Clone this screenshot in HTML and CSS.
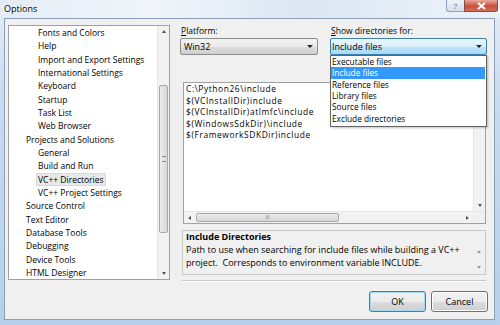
FILE: index.html
```html
<!DOCTYPE html>
<html lang="en">
<head>
    <meta charset="UTF-8">
    <title>Options</title>
    <link rel="stylesheet" href="styles.css">
</head>
<body>
    <div class="window">
        <div class="titlebar">
            <span class="title">Options</span>
            <div class="caption-btns">
                <span class="cap help">?</span>
                <span class="cap close">
                    <svg width="9" height="8" viewBox="0 0 9 8"><path d="M1 1 L8 7 M8 1 L1 7" stroke="#fff" stroke-width="2"/></svg>
                </span>
            </div>
        </div>

        <div class="client">
            <div class="tree">
                <ul class="tree-items">
                    <li class="child">Fonts and Colors</li>
                    <li class="child">Help</li>
                    <li class="child">Import and Export Settings</li>
                    <li class="child">International Settings</li>
                    <li class="child">Keyboard</li>
                    <li class="child">Startup</li>
                    <li class="child">Task List</li>
                    <li class="child">Web Browser</li>
                    <li>Projects and Solutions</li>
                    <li class="child">General</li>
                    <li class="child">Build and Run</li>
                    <li class="child"><span class="selected">VC++ Directories</span></li>
                    <li class="child">VC++ Project Settings</li>
                    <li>Source Control</li>
                    <li>Text Editor</li>
                    <li>Database Tools</li>
                    <li>Debugging</li>
                    <li>Device Tools</li>
                    <li>HTML Designer</li>
                </ul>
                <div class="vscroll tree-scroll">
                    <span class="arr up"></span>
                    <div class="track">
                        <div class="thumb"><span class="grip"></span></div>
                    </div>
                    <span class="arr down"></span>
                </div>
            </div>

            <div class="panel">
                <div class="fields">
                    <div class="field platform">
                        <label><u>P</u>latform:</label>
                        <div class="select">Win32<span class="caret"></span></div>
                    </div>
                    <div class="field show">
                        <label><u>S</u>how directories for:</label>
                        <div class="select focused">Include files<span class="caret"></span></div>
                        <ul class="dropdown">
                            <li>Executable files</li>
                            <li class="hot">Include files</li>
                            <li>Reference files</li>
                            <li>Library files</li>
                            <li>Source files</li>
                            <li>Exclude directories</li>
                        </ul>
                    </div>
                </div>

                <div class="dirlist">
                    <div class="dirs-body">
                        <ul class="dirs">
                            <li>C:\Python26\include</li>
                            <li>$(VCInstallDir)include</li>
                            <li>$(VCInstallDir)atlmfc\include</li>
                            <li>$(WindowsSdkDir)\include</li>
                            <li>$(FrameworkSDKDir)include</li>
                        </ul>
                        <div class="vscroll dir-scroll">
                            <span class="arr up"></span>
                            <div class="track"></div>
                            <span class="arr down"></span>
                        </div>
                    </div>
                    <div class="hscroll">
                        <span class="arr left"></span>
                        <div class="htrack">
                            <div class="hthumb"><span class="hgrip">III</span></div>
                        </div>
                        <span class="arr right"></span>
                        <span class="corner"></span>
                    </div>
                </div>

                <div class="desc">
                    <div class="desc-text">
                        <div class="desc-title">Include Directories</div>
                        <div>Path to use when searching for include files while building a VC++</div>
                        <div>project.&nbsp; Corresponds to environment variable INCLUDE.</div>
                    </div>
                    <div class="desc-scroll">
                        <span class="arr up"></span>
                        <span class="arr down"></span>
                    </div>
                </div>

                <div class="sep"></div>

                <div class="buttons">
                    <button class="btn default">OK</button>
                    <button class="btn">Cancel</button>
                </div>
            </div>
        </div>
    </div>
</body>
</html>
```

FILE: styles.css
```css
body {
    margin: 0;
    padding: 0;
    font-family: "Open Sans", "Noto Sans", sans-serif;
    font-size: 8.5px;
    color: #000;
}

ul {
    list-style-type: none;
    margin: 0;
    padding: 0;
}

/* Window frame */
.window {
    width: 500px;
    height: 325px;
    background: linear-gradient(to bottom, #e4edf7 0%, #c9dbef 30%, #b7cfea 100%);
    display: flex;
    flex-direction: column;
    overflow: hidden;
}

.titlebar {
    height: 18px;
    display: flex;
    justify-content: space-between;
    align-items: flex-start;
    background: linear-gradient(to right, #e3ecf6, #f1f5fa 30%, #dce7f3 60%, #ecf2f9);
}

.title {
    margin: 3px 0 0 4px;
    font-size: 9px;
    line-height: 11px;
    text-shadow: 0 0 4px #fff, 0 0 6px #fff;
}

.caption-btns {
    display: flex;
    margin-right: 2px;
}

.cap {
    height: 11px;
    display: flex;
    align-items: center;
    justify-content: center;
    border: 1px solid #8ea3bd;
    border-top: none;
    font-size: 8px;
    line-height: 8px;
    color: #56637a;
}

.help {
    width: 17px;
    background: linear-gradient(to bottom, #eef3f9, #d3dfee);
    border-radius: 0 0 0 3px;
    border-right: none;
}

.close {
    width: 32px;
    background: linear-gradient(to bottom, #e9a99c, #c7503b 55%, #d2705b);
    border-color: #8d4b45;
    border-radius: 0 0 3px 0;
}

.client {
    margin: 0 5px 0 4px;
    height: 302px;
    background-color: #f0f0f0;
    border: 1px solid #8aa0ba;
    display: flex;
    align-items: flex-start;
    padding: 6px 0 0 3px;
    box-sizing: border-box;
}

/* Tree on the left */
.tree {
    width: 162px;
    height: 255px;
    background-color: #fff;
    border: 1px solid #a0a0a0;
    box-sizing: border-box;
    display: flex;
    overflow: hidden;
}

.tree-items {
    flex: 1;
    line-height: 13.33px;
    white-space: nowrap;
}

.tree-items li {
    padding-left: 17px;
}

.tree-items li.child {
    padding-left: 29px;
}

.tree-items .selected {
    background-color: #e8e8e8;
    border: 1px solid #dadada;
    padding: 0 1px;
    margin-left: -2px;
}

/* Scrollbars */
.vscroll {
    width: 11px;
    background-color: #f2f2f2;
    border-left: 1px solid #e6e6e6;
    display: flex;
    flex-direction: column;
    align-items: center;
}

.track {
    flex: 1;
    width: 100%;
    position: relative;
}

.thumb {
    position: absolute;
    top: 48px;
    left: 1px;
    right: 1px;
    height: 148px;
    background: linear-gradient(to right, #ececec, #d8d8d8);
    border: 1px solid #a8a8a8;
    border-radius: 2px;
    box-sizing: border-box;
    display: flex;
    align-items: center;
    justify-content: center;
}

.grip {
    width: 4px;
    height: 4px;
    border-top: 1px solid #888;
    border-bottom: 1px solid #888;
}

.arr {
    width: 0;
    height: 0;
    border: 2.5px solid transparent;
    margin: 4px 0;
}

.arr.up {
    border-bottom: 3px solid #555;
    border-top-width: 0;
}

.arr.down {
    border-top: 3px solid #555;
    border-bottom-width: 0;
}

.arr.left {
    border-right: 3px solid #555;
    border-left-width: 0;
    margin: 0 4px;
}

.arr.right {
    border-left: 3px solid #555;
    border-right-width: 0;
    margin: 0 4px;
}

/* Right panel */
.panel {
    width: 308px;
    margin-left: 10px;
    display: flex;
    flex-direction: column;
}

.fields {
    display: flex;
    gap: 12px;
}

.field {
    display: flex;
    flex-direction: column;
    position: relative;
}

.field label {
    line-height: 11px;
    margin-bottom: 2px;
    padding-left: 1px;
}

.platform {
    width: 138px;
}

.show {
    width: 157px;
}

.select {
    height: 17px;
    box-sizing: border-box;
    border: 1px solid #8c8c8c;
    border-radius: 2px;
    background: linear-gradient(to bottom, #f2f2f2 0%, #ebebeb 50%, #dddddd 51%, #cfcfcf 100%);
    padding-left: 3px;
    line-height: 15px;
    font-size: 9px;
    display: flex;
    justify-content: space-between;
    align-items: center;
}

.select.focused {
    border-color: #3c7fb1;
    background: linear-gradient(to bottom, #eaf6fd 0%, #d9f0fc 50%, #bee6fd 51%, #a7d9f5 100%);
    padding-left: 1px;
}

.caret {
    width: 0;
    height: 0;
    border-left: 3px solid transparent;
    border-right: 3px solid transparent;
    border-top: 3px solid #222;
    margin-right: 4px;
}

.dropdown {
    position: absolute;
    top: 100%;
    left: 0;
    width: 157px;
    box-sizing: border-box;
    background-color: #fff;
    border: 1px solid #646464;
    line-height: 11.33px;
    font-size: 8.3px;
    padding: 0 0 2px 0;
    z-index: 10;
    box-shadow: 1px 1px 2px rgba(0, 0, 0, 0.25);
}

.dropdown li {
    padding-left: 1px;
}

.dropdown li.hot {
    background-color: #3399ff;
    color: #fff;
    margin-right: 1px;
}

/* Directory list */
.dirlist {
    margin: 27px 2px 0 3px;
    height: 142px;
    box-sizing: border-box;
    border: 1px solid #a0a0a0;
    background-color: #fff;
    display: flex;
    flex-direction: column;
}

.dirs-body {
    flex: 1;
    display: flex;
}

.dirs {
    flex: 1;
    line-height: 11.5px;
    font-size: 8.4px;
    letter-spacing: 0.6px;
    padding-left: 2px;
    white-space: nowrap;
}

.dir-scroll {
    justify-content: space-between;
}

.hscroll {
    height: 11px;
    background-color: #f2f2f2;
    border-top: 1px solid #e6e6e6;
    display: flex;
    align-items: center;
}

.htrack {
    flex: 1;
    height: 100%;
    position: relative;
}

.hthumb {
    position: absolute;
    top: 1px;
    bottom: 1px;
    left: 1px;
    width: 143px;
    background: linear-gradient(to bottom, #ececec, #d5d5d5);
    border: 1px solid #a8a8a8;
    border-radius: 2px;
    box-sizing: border-box;
    display: flex;
    align-items: center;
    justify-content: center;
}

.hgrip {
    font-size: 5px;
    line-height: 5px;
    color: #777;
}

.corner {
    width: 12px;
    height: 100%;
    background-color: #f0f0f0;
}

/* Description */
.desc {
    margin: 6px 2px 0 2px;
    height: 45px;
    box-sizing: border-box;
    border: 1px solid #c8c8c8;
    display: flex;
    font-size: 9px;
}

.desc-text {
    flex: 1;
    padding: 0 0 0 3px;
    line-height: 13px;
}

.desc-title {
    font-weight: bold;
    line-height: 12px;
}

.desc-scroll {
    width: 12px;
    margin-top: 15px;
    display: flex;
    flex-direction: column;
    align-items: center;
    justify-content: space-between;
    padding-bottom: 1px;
}

.desc-scroll .arr.up {
    border-bottom-color: #999;
}

.desc-scroll .arr.down {
    border-top-color: #999;
}

.sep {
    margin: 5px 2px 0 2px;
    border-top: 1px solid #c8c8c8;
    border-bottom: 1px solid #fff;
}

.buttons {
    margin-top: 9px;
    display: flex;
    justify-content: flex-end;
    gap: 5px;
}

.btn {
    width: 57px;
    height: 21px;
    font-family: inherit;
    font-size: 9px;
    color: #000;
    border: 1px solid #707070;
    border-radius: 3px;
    background: linear-gradient(to bottom, #f2f2f2 0%, #ebebeb 50%, #dddddd 51%, #cfcfcf 100%);
    box-shadow: inset 0 0 0 1px #fcfcfc;
    padding: 0;
}

.btn.default {
    border-color: #3c7fb1;
    box-shadow: inset 0 0 0 1px #a5d8f5;
}
```
